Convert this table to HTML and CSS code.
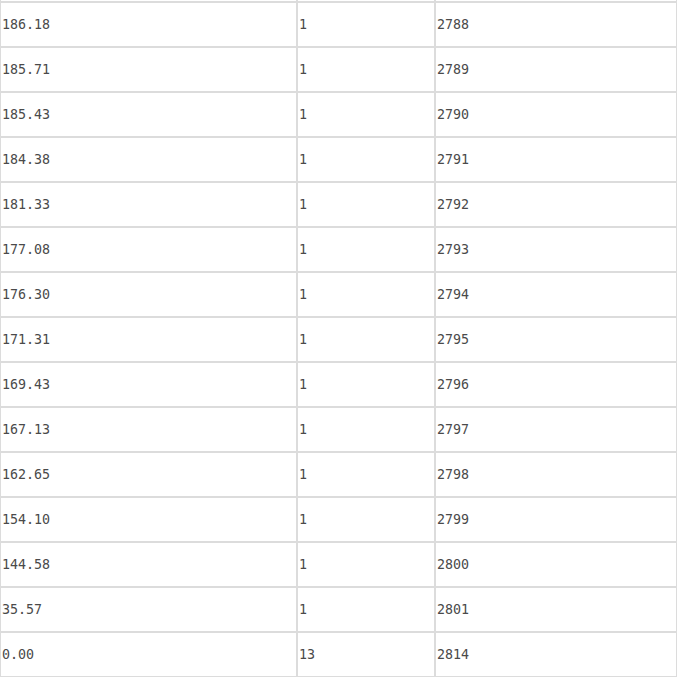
FILE: index.html
```html
<!DOCTYPE html>
<html>
<head>
<meta charset="utf-8">
<link rel="stylesheet" href="styles.css">
</head>
<body>
<div class="grid">
  <div class="cell"></div><div class="cell"></div><div class="cell"></div>
  <div class="cell">186.18</div><div class="cell">1</div><div class="cell">2788</div>
  <div class="cell">185.71</div><div class="cell">1</div><div class="cell">2789</div>
  <div class="cell">185.43</div><div class="cell">1</div><div class="cell">2790</div>
  <div class="cell">184.38</div><div class="cell">1</div><div class="cell">2791</div>
  <div class="cell">181.33</div><div class="cell">1</div><div class="cell">2792</div>
  <div class="cell">177.08</div><div class="cell">1</div><div class="cell">2793</div>
  <div class="cell">176.30</div><div class="cell">1</div><div class="cell">2794</div>
  <div class="cell">171.31</div><div class="cell">1</div><div class="cell">2795</div>
  <div class="cell">169.43</div><div class="cell">1</div><div class="cell">2796</div>
  <div class="cell">167.13</div><div class="cell">1</div><div class="cell">2797</div>
  <div class="cell">162.65</div><div class="cell">1</div><div class="cell">2798</div>
  <div class="cell">154.10</div><div class="cell">1</div><div class="cell">2799</div>
  <div class="cell">144.58</div><div class="cell">1</div><div class="cell">2800</div>
  <div class="cell">35.57</div><div class="cell">1</div><div class="cell">2801</div>
  <div class="cell">0.00</div><div class="cell">13</div><div class="cell">2814</div>
</div>
</body>
</html>
```
FILE: styles.css
```css
html, body {
  margin: 0;
  padding: 0;
  background: #fff;
  overflow: hidden;
}
.grid {
  display: grid;
  grid-template-columns: 297px 138px 242px;
  grid-template-rows: 3px;
  grid-auto-rows: 45px;
  margin-top: -1px;
  font-family: "DejaVu Sans Mono", "Liberation Mono", monospace;
  font-size: 13.33px;
  color: #4a4a4a;
}
.cell {
  box-sizing: border-box;
  border: 1px solid #dcdcdc;
  padding: 0 0 0 1px;
  display: flex;
  align-items: center;
  white-space: nowrap;
}
```
